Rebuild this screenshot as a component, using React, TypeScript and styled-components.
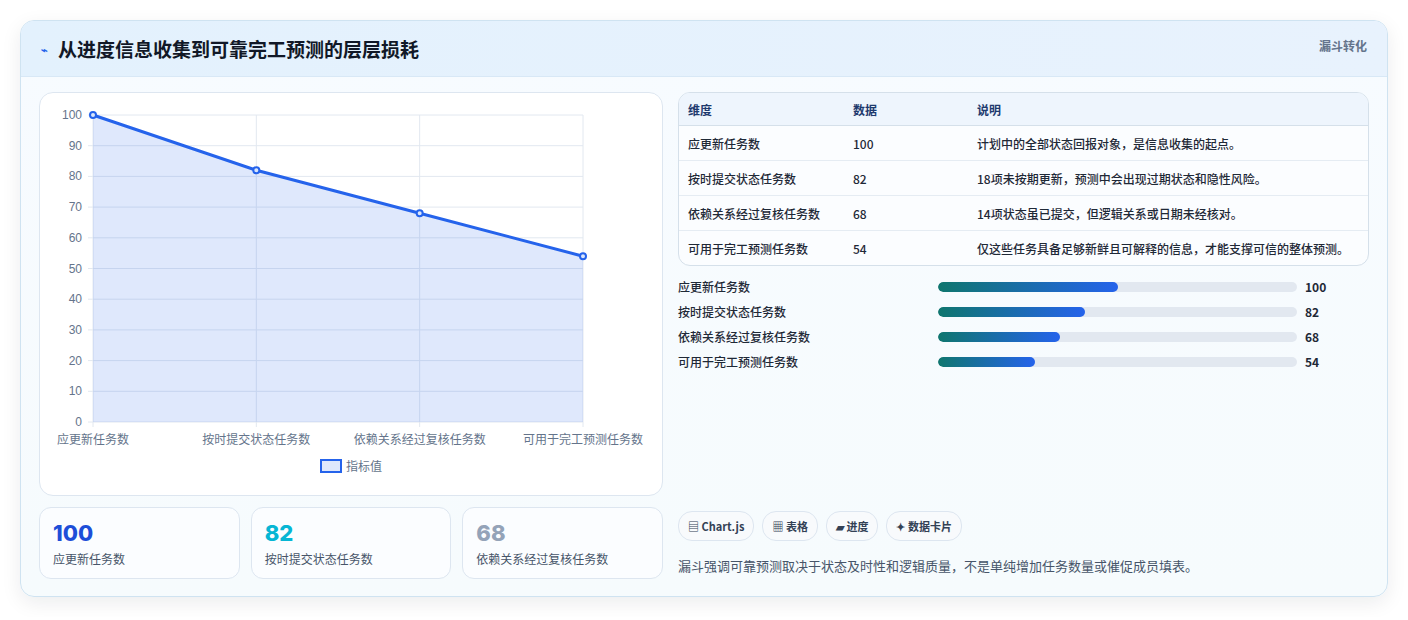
import styled, { createGlobalStyle } from 'styled-components';

const GlobalStyle = createGlobalStyle`
  body {
    margin: 0;
    background: #ffffff;
    font-family: "Noto Sans CJK SC", "Noto Sans", sans-serif;
  }
`;

interface Row {
  name: string;
  value: number;
  note: string;
}

const rows: Row[] = [
  { name: '应更新任务数', value: 100, note: '计划中的全部状态回报对象，是信息收集的起点。' },
  { name: '按时提交状态任务数', value: 82, note: '18项未按期更新，预测中会出现过期状态和隐性风险。' },
  { name: '依赖关系经过复核任务数', value: 68, note: '14项状态虽已提交，但逻辑关系或日期未经核对。' },
  { name: '可用于完工预测任务数', value: 54, note: '仅这些任务具备足够新鲜且可解释的信息，才能支撑可信的整体预测。' }
];

const Page = styled.div`
  padding: 20px 20px 20px 20px;
`;

const Panel = styled.div`
  border: 1px solid #cfe3f1;
  border-radius: 14px;
  background: linear-gradient(180deg, #f7fbff 0%, #f6fbfd 100%);
  box-shadow: 0 6px 20px rgba(15, 23, 42, 0.08);
  overflow: hidden;
`;

const Header = styled.div`
  display: flex;
  align-items: center;
  justify-content: space-between;
  height: 55px;
  padding: 0 20px;
  background: linear-gradient(90deg, #e3f1fd, #e8f2fd);
  border-bottom: 1px solid #d8e8f6;
`;

const Title = styled.h1`
  margin: 0;
  font-size: 19px;
  font-weight: 700;
  color: #111827;
  display: flex;
  align-items: center;
  gap: 10px;
`;

const Tag = styled.span`
  font-size: 12px;
  font-weight: 700;
  color: #64748b;
  align-self: flex-start;
  margin-top: 16px;
`;

const Body = styled.div`
  display: grid;
  grid-template-columns: 624px 1fr;
  gap: 15px;
  padding: 15px 18px 17px 18px;
`;

const Col = styled.div`
  display: flex;
  flex-direction: column;
  gap: 11px;
`;

const ChartCard = styled.div`
  height: 402px;
  background: #ffffff;
  border: 1px solid #dde6f0;
  border-radius: 14px;
`;

const Stats = styled.div`
  display: grid;
  grid-template-columns: repeat(3, 1fr);
  gap: 11px;
`;

const Stat = styled.div`
  height: 72px;
  box-sizing: border-box;
  padding: 12px 13px;
  background: #fbfdff;
  border: 1px solid #dde6f0;
  border-radius: 12px;
`;

const StatValue = styled.div<{ $color: string }>`
  font-family: Inter, "Noto Sans", sans-serif;
  font-size: 22px;
  font-weight: 800;
  line-height: 26px;
  color: ${(p) => p.$color};
`;

const StatLabel = styled.div`
  font-size: 12px;
  color: #475569;
  margin-top: 4px;
`;

const Table = styled.table`
  width: 100%;
  border-collapse: separate;
  border-spacing: 0;
  border: 1px solid #d5e0ea;
  border-radius: 12px;
  overflow: hidden;
  background: #fbfdff;
  font-size: 12px;
  color: #1f2937;
`;

const Th = styled.th`
  text-align: left;
  font-weight: 700;
  color: #1e3a6e;
  background: #eef5fd;
  height: 32px;
  padding: 0 9px;
  border-bottom: 1px solid #d5e0ea;
`;

const Td = styled.td<{ $last?: boolean }>`
  height: 34px;
  padding: 0 9px;
  font-weight: 500;
  border-bottom: ${(p) => (p.$last ? 'none' : '1px solid #e5ecf3')};
`;

const Bars = styled.div`
  display: flex;
  flex-direction: column;
  gap: 9px;
  margin-top: 1px;
`;

const BarRow = styled.div`
  display: grid;
  grid-template-columns: 252px 359px 1fr;
  align-items: center;
  gap: 8px;
  height: 16px;
  font-size: 12px;
  font-weight: 500;
  color: #1f2937;
`;

const BarValue = styled.span`
  font-weight: 700;
`;

const Track = styled.div`
  height: 10px;
  border-radius: 5px;
  background: #e2e8f0;
  overflow: hidden;
`;

const Fill = styled.div`
  height: 100%;
  border-radius: 5px;
  background: linear-gradient(90deg, #0f766e, #2563eb);
`;

const Spacer = styled.div`
  flex: 1;
`;

const Chips = styled.div`
  display: flex;
  gap: 8px;
`;

const Chip = styled.span`
  display: inline-flex;
  align-items: center;
  gap: 4px;
  height: 28px;
  padding: 0 9px;
  border: 1px solid #dde6f0;
  border-radius: 14px;
  background: #f8fafc;
  font-size: 11px;
  font-weight: 700;
  color: #334155;
`;

const Note = styled.p`
  margin: 4px 0 4px;
  font-size: 13px;
  color: #475569;
`;

const ChartSvg = () => {
  const x0 = 53;
  const x1 = 543;
  const y0 = 22;
  const y1 = 329;
  const xs = [0, 1, 2, 3].map((i) => x0 + ((x1 - x0) / 3) * i);
  const ys = rows.map((r) => y1 - ((y1 - y0) * r.value) / 100);
  const pts = xs.map((x, i) => `${x},${ys[i]}`).join(' ');
  return (
    <svg width="622" height="400" style={{ display: 'block' }}>
      {[0, 10, 20, 30, 40, 50, 60, 70, 80, 90, 100].map((v) => {
        const y = y1 - ((y1 - y0) * v) / 100;
        return (
          <g key={v}>
            <line x1={x0 - 5} x2={x1} y1={y} y2={y} stroke="#e2e8f0" />
            <text x={x0 - 11} y={y + 4} textAnchor="end" fontSize="12" fill="#64748b" fontFamily="Liberation Sans, sans-serif">
              {v}
            </text>
          </g>
        );
      })}
      {xs.map((x) => (
        <line key={x} x1={x} x2={x} y1={y0} y2={y1 + 5} stroke="#e2e8f0" />
      ))}
      <polygon points={`${x0},${y1} ${pts} ${x1},${y1}`} fill="rgba(37,99,235,0.15)" />
      <polyline points={pts} fill="none" stroke="#2563eb" strokeWidth="3" />
      {xs.map((x, i) => (
        <circle key={i} cx={x} cy={ys[i]} r="3" fill="#dbe6fb" stroke="#2563eb" strokeWidth="2" />
      ))}
      {rows.map((r, i) => (
        <text key={r.name} x={xs[i]} y={351} textAnchor="middle" fontSize="12" fill="#64748b">
          {r.name}
        </text>
      ))}
      <rect x="281" y="367" width="20" height="12" fill="rgba(37,99,235,0.15)" stroke="#2563eb" strokeWidth="2" />
      <text x="306" y="378" fontSize="12" fill="#64748b">指标值</text>
    </svg>
  );
};

export default function App() {
  return (
    <Page>
      <GlobalStyle />
      <Panel>
        <Header>
          <Title>
            <span style={{ color: '#2563eb', fontSize: 11 }}>⌁</span>从进度信息收集到可靠完工预测的层层损耗
          </Title>
          <Tag>漏斗转化</Tag>
        </Header>
        <Body>
          <Col>
            <ChartCard>
              <ChartSvg />
            </ChartCard>
            <Stats>
              <Stat>
                <StatValue $color="#1d4ed8">100</StatValue>
                <StatLabel>应更新任务数</StatLabel>
              </Stat>
              <Stat>
                <StatValue $color="#06b6d4">82</StatValue>
                <StatLabel>按时提交状态任务数</StatLabel>
              </Stat>
              <Stat>
                <StatValue $color="#94a3b8">68</StatValue>
                <StatLabel>依赖关系经过复核任务数</StatLabel>
              </Stat>
            </Stats>
          </Col>
          <Col>
            <Table>
              <thead>
                <tr>
                  <Th style={{ width: 147 }}>维度</Th>
                  <Th style={{ width: 106 }}>数据</Th>
                  <Th>说明</Th>
                </tr>
              </thead>
              <tbody>
                {rows.map((r, i) => (
                  <tr key={r.name}>
                    <Td $last={i === rows.length - 1}>{r.name}</Td>
                    <Td $last={i === rows.length - 1}>{r.value}</Td>
                    <Td $last={i === rows.length - 1}>{r.note}</Td>
                  </tr>
                ))}
              </tbody>
            </Table>
            <Bars>
              {rows.map((r) => (
                <BarRow key={r.name}>
                  <span>{r.name}</span>
                  <Track>
                    <Fill style={{ width: `${r.value / 2}%` }} />
                  </Track>
                  <BarValue>{r.value}</BarValue>
                </BarRow>
              ))}
            </Bars>
            <Spacer />
            <Chips>
              <Chip>▤ Chart.js</Chip>
              <Chip>▦ 表格</Chip>
              <Chip>▰ 进度</Chip>
              <Chip>✦ 数据卡片</Chip>
            </Chips>
            <Note>漏斗强调可靠预测取决于状态及时性和逻辑质量，不是单纯增加任务数量或催促成员填表。</Note>
          </Col>
        </Body>
      </Panel>
    </Page>
  );
}
